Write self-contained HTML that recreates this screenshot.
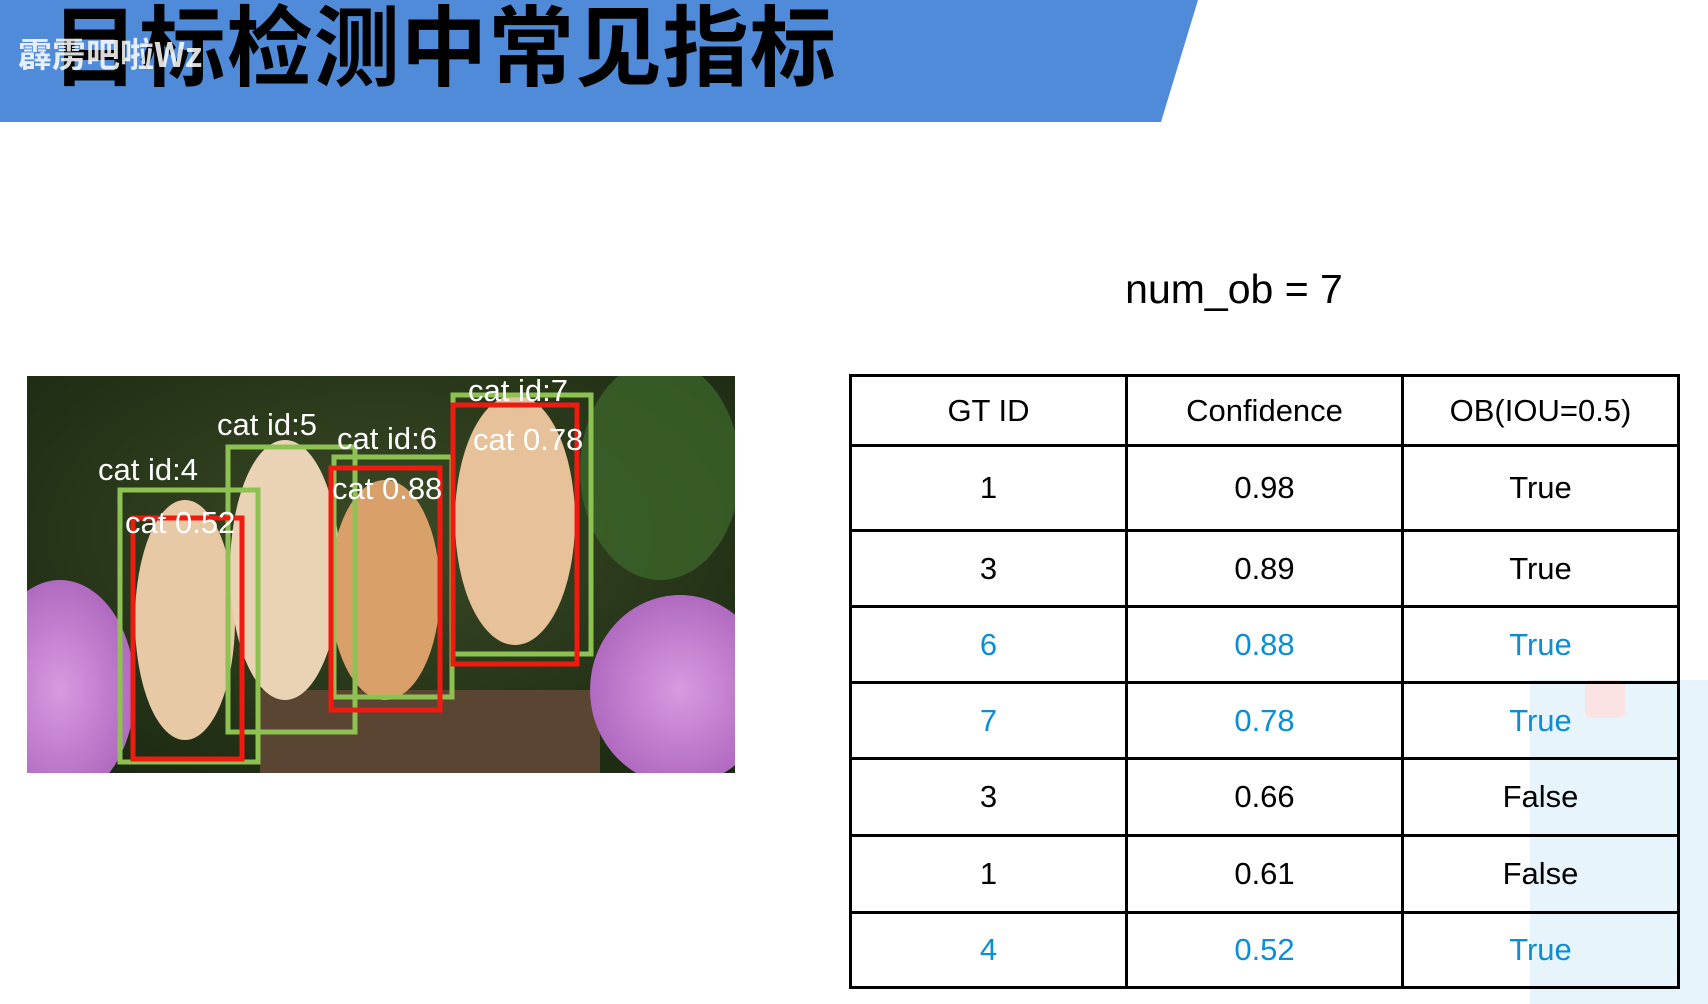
<!DOCTYPE html>
<html><head><meta charset="utf-8"><style>
html,body{margin:0;padding:0;background:#fff;width:1708px;height:1004px;overflow:hidden;position:relative;font-family:"Liberation Sans","Noto Sans CJK SC",sans-serif}
.t{position:absolute;left:849px;top:374px;border-collapse:collapse;font-family:"Liberation Sans",sans-serif;font-size:31px}
.t td{border:3px solid #000;text-align:center;padding:0;width:273px}
.b{color:#0a8fd6}
</style></head><body>
<div style="position:absolute;left:1530px;top:680px;width:178px;height:324px;background:#e8f4fc"></div>
<div style="position:absolute;left:1585px;top:680px;width:40px;height:38px;background:#fbe3e3;border-radius:6px"></div>
<svg style="position:absolute;left:0;top:0" width="1708" height="130"><polygon points="0,0 1198,0 1161,122 0,122" fill="#4f8bd9"/></svg>
<div style="position:absolute;left:52px;top:-22px;font-size:88px;font-weight:bold;color:#000;letter-spacing:1px;font-family:'Noto Sans CJK SC',sans-serif;transform:scaleX(0.98);transform-origin:top left;white-space:nowrap">目标检测中常见指标</div>
<div style="position:absolute;left:18px;top:28px;font-size:34px;font-weight:bold;color:rgba(255,255,255,.85);font-family:'Noto Sans CJK SC',sans-serif">霹雳吧啦Wz</div>
<div style="position:absolute;left:0;width:2468px;top:266px;text-align:center;font-size:41px;color:#000;font-family:'Liberation Sans',sans-serif">num_ob = 7</div>
<svg style="position:absolute;left:0;top:0" width="800" height="800">
<defs>
<clipPath id="c"><rect x="27" y="376" width="708" height="397"/></clipPath>
<radialGradient id="bg" cx="50%" cy="40%" r="70%"><stop offset="0" stop-color="#3b4a25"/><stop offset="1" stop-color="#1b2a12"/></radialGradient>
<radialGradient id="fl" cx="50%" cy="50%" r="50%"><stop offset="0" stop-color="#d99ae0"/><stop offset="1" stop-color="#b06ac0"/></radialGradient>
</defs>
<g clip-path="url(#c)">
<rect x="27" y="376" width="708" height="397" fill="url(#bg)"/>
<ellipse cx="660" cy="470" rx="80" ry="110" fill="#3f6b2c" opacity=".7"/>
<rect x="260" y="690" width="340" height="83" fill="#5a4533"/>
<ellipse cx="60" cy="690" rx="75" ry="110" fill="url(#fl)"/>
<ellipse cx="680" cy="690" rx="90" ry="95" fill="url(#fl)"/>
<ellipse cx="185" cy="620" rx="50" ry="120" fill="#e8c9a6"/>
<ellipse cx="285" cy="570" rx="55" ry="130" fill="#ead2b4"/>
<ellipse cx="385" cy="590" rx="55" ry="110" fill="#d9a06a"/>
<ellipse cx="515" cy="520" rx="60" ry="125" fill="#e6c199"/>
</g>
<g fill="none" stroke="#8dc152" stroke-width="5">
<rect x="120" y="490" width="138" height="272"/>
<rect x="228" y="447" width="127" height="285"/>
<rect x="334" y="457" width="118" height="240"/>
<rect x="453" y="395" width="138" height="259"/>
</g>
<g fill="none" stroke="#f01a10" stroke-width="5">
<rect x="133" y="518" width="109" height="241"/>
<rect x="331" y="468" width="109" height="242"/>
<rect x="453" y="405" width="124" height="259"/>
</g>
<g fill="#fff" font-family="Liberation Sans,sans-serif" font-size="31">
<text x="98" y="480">cat id:4</text>
<text x="217" y="435">cat id:5</text>
<text x="337" y="449">cat id:6</text>
<text x="468" y="401">cat id:7</text>
<text x="473" y="450">cat 0.78</text>
<text x="332" y="499">cat 0.88</text>
<text x="125" y="533">cat 0.52</text>
</g>
</svg>
<table class="t">
<tr style="height:70px"><td>GT ID</td><td>Confidence</td><td>OB(IOU=0.5)</td></tr>
<tr style="height:85px"><td>1</td><td>0.98</td><td>True</td></tr>
<tr style="height:76px"><td>3</td><td>0.89</td><td>True</td></tr>
<tr style="height:76px" class="b"><td>6</td><td>0.88</td><td>True</td></tr>
<tr style="height:76px" class="b"><td>7</td><td>0.78</td><td>True</td></tr>
<tr style="height:77px"><td>3</td><td>0.66</td><td>False</td></tr>
<tr style="height:77px"><td>1</td><td>0.61</td><td>False</td></tr>
<tr style="height:75px" class="b"><td>4</td><td>0.52</td><td>True</td></tr>
</table>
</body></html>
